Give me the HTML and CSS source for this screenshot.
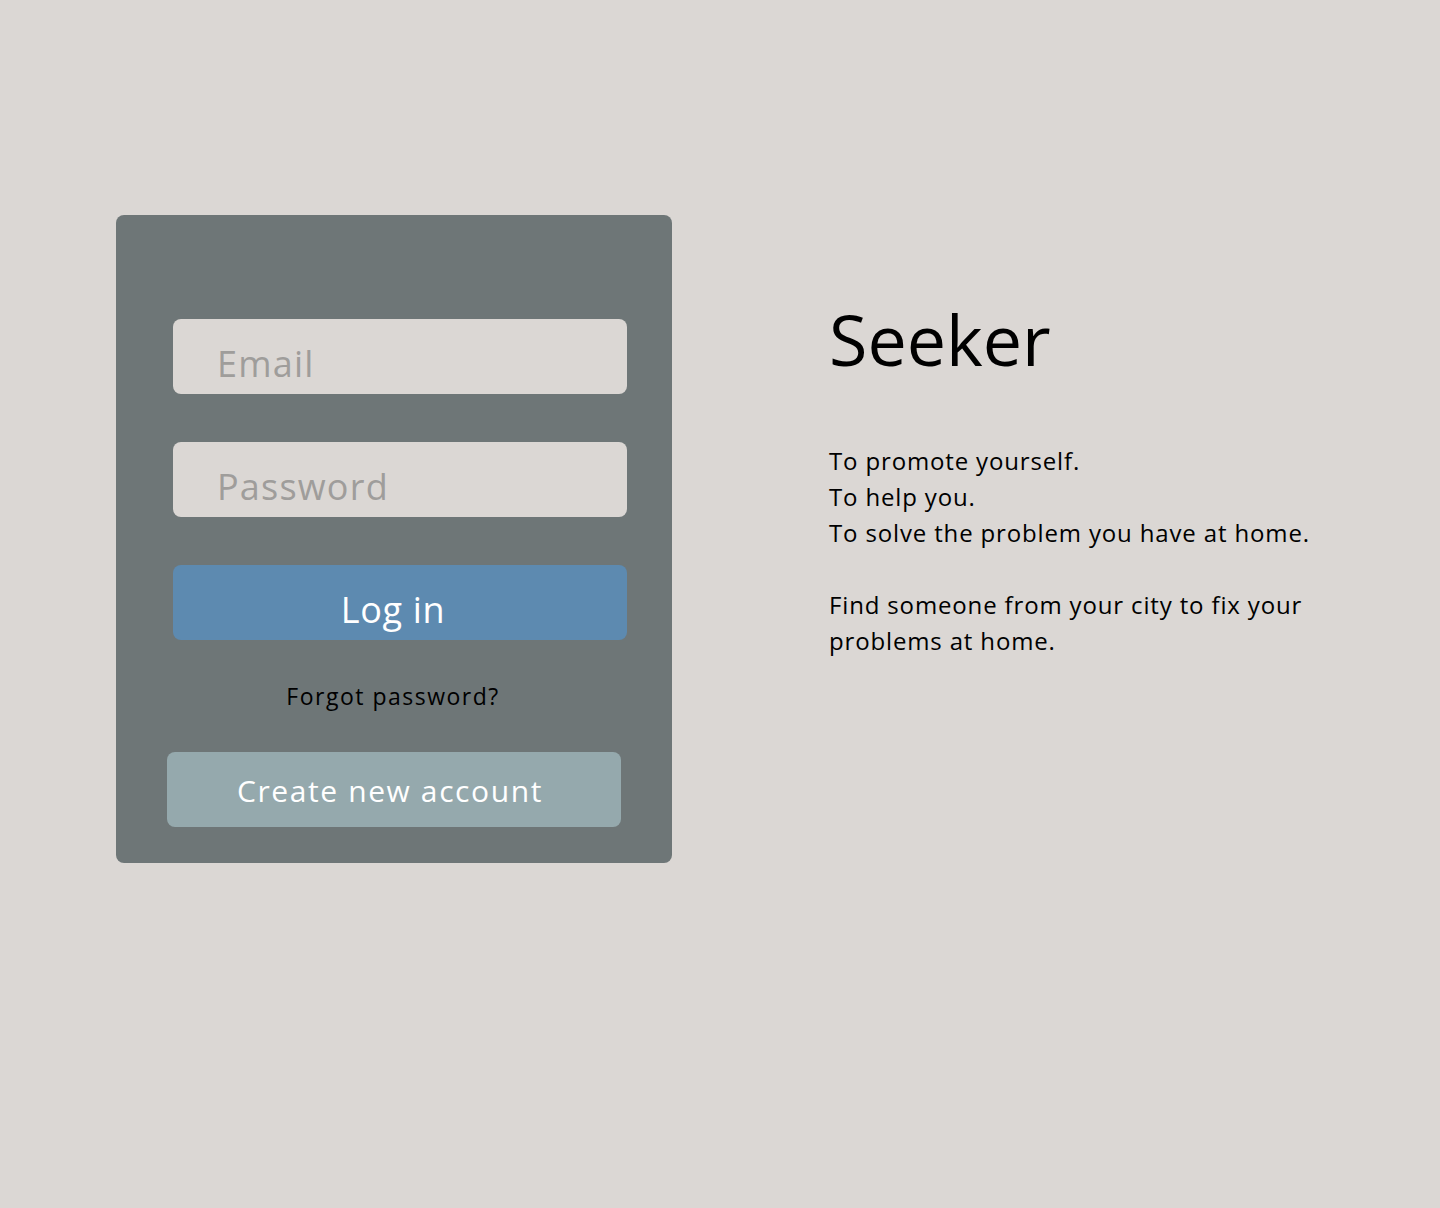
FILE: index.html
```html
<!DOCTYPE html>
<html lang="en">
<head>
<meta charset="utf-8">
<title>Seeker</title>
<link rel="stylesheet" href="styles.css">
</head>
<body>
<main class="page">
  <section class="card">
    <form class="login-form">
      <input class="field" type="email" placeholder="Email">
      <input class="field" type="password" placeholder="Password">
      <button class="btn-login" type="button">Log in</button>
      <a class="forgot" href="#">Forgot password?</a>
      <button class="btn-create" type="button">Create new account</button>
    </form>
  </section>
  <section class="intro">
    <h1 class="brand">Seeker</h1>
    <p class="lead">To promote yourself.<br>To help you.<br>To solve the problem you have at home.</p>
    <p class="lead">Find someone from your city to fix your problems at home.</p>
  </section>
</main>
</body>
</html>
```

FILE: styles.css
```css
* { box-sizing: border-box; }

html, body {
  margin: 0;
  background: #dbd7d4;
  font-family: "Open Sans", "Liberation Sans", sans-serif;
  color: #000;
}

.page {
  display: flex;
  align-items: flex-start;
  gap: 157px;
  padding: 215px 0 0 116px;
  min-height: 1208px;
}

.card {
  width: 556px;
  height: 648px;
  background: #6e7677;
  border-radius: 8px;
  padding: 104px 0 0 57px;
}

.login-form {
  display: flex;
  flex-direction: column;
  align-items: flex-start;
  width: 454px;
}

.field {
  width: 454px;
  height: 75px;
  border: none;
  border-radius: 8px;
  background: #dbd7d4;
  padding: 20px 44px 6px;
  font-family: inherit;
  font-size: 36px;
  letter-spacing: 1.2px;
  color: #333;
  outline: none;
  margin-bottom: 48px;
}

.field::placeholder { color: #9f9d9b; }

.btn-login {
  width: 454px;
  height: 75px;
  border: none;
  border-radius: 8px;
  background: #5d8ab0;
  color: #fff;
  font-family: inherit;
  font-size: 36px;
  letter-spacing: 0.7px;
  padding: 20px 14px 6px 0;
  line-height: 49px;
  cursor: pointer;
}

.forgot {
  align-self: center;
  margin-top: 38px;
  margin-left: -14px;
  font-size: 23px;
  letter-spacing: 1.5px;
  line-height: 36px;
  color: #000;
  text-decoration: none;
}

.btn-create {
  margin-top: 38px;
  margin-left: -6px;
  width: 454px;
  height: 75px;
  border: none;
  border-radius: 8px;
  background: #95a9ad;
  color: #fff;
  font-family: inherit;
  font-size: 30px;
  letter-spacing: 1.6px;
  line-height: 41px;
  padding: 18px 8px 16px 0;
  cursor: pointer;
}

.intro {
  margin-top: 74px;
  width: 520px;
}

.brand {
  margin: 0;
  font-size: 70px;
  font-weight: 400;
  line-height: 100px;
}

.lead {
  margin: 0 0 36px;
  font-size: 24px;
  letter-spacing: 0.85px;
  line-height: 36px;
}

.brand + .lead { margin-top: 54px; }
```
